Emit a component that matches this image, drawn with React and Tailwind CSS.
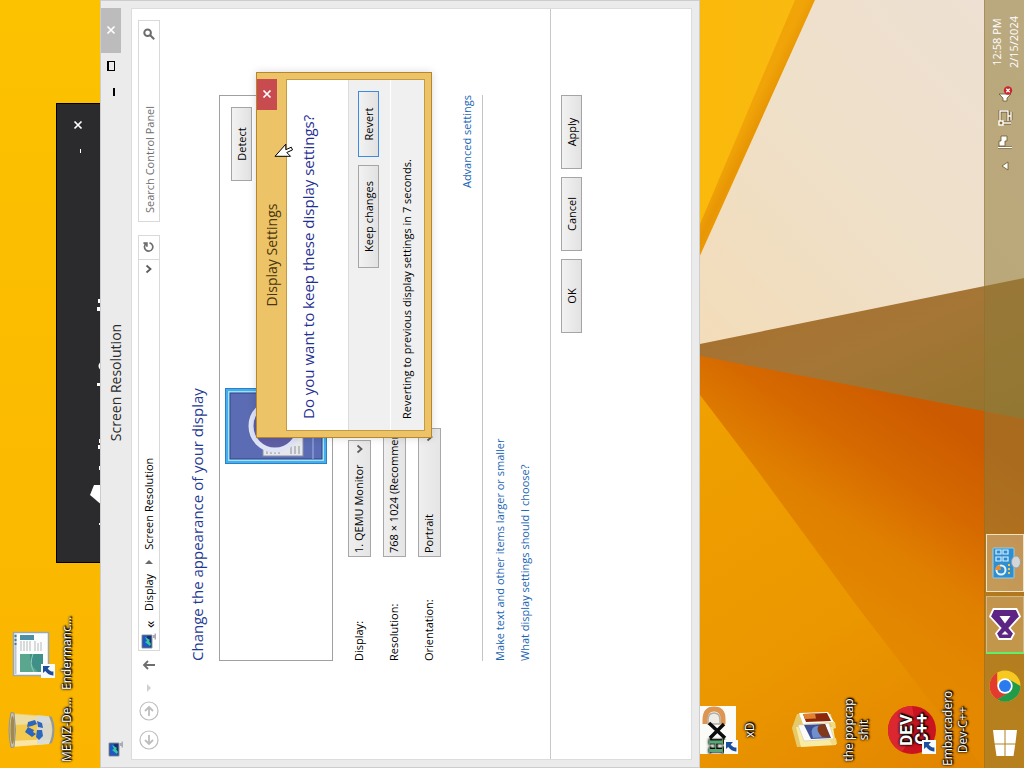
import React from "react";

const uiFont = "font-['Open_Sans','Noto_Sans',sans-serif]";

function Wallpaper() {
  return (
    <svg className="absolute inset-0 h-full w-full" viewBox="0 0 1024 768" preserveAspectRatio="none" aria-hidden="true">
      <defs>
        <linearGradient id="wpYellow" x1="0" y1="0" x2="0" y2="1">
          <stop offset="0" stopColor="#fcc200" />
          <stop offset="1" stopColor="#fbb500" />
        </linearGradient>
        <linearGradient id="wpTop" x1="0" y1="0" x2="1" y2="0">
          <stop offset="0" stopColor="#fab90a" />
          <stop offset="1" stopColor="#f8bc1c" />
        </linearGradient>
        <linearGradient id="wpCream" x1="0" y1="1" x2="1" y2="0">
          <stop offset="0" stopColor="#f3dcb8" />
          <stop offset="0.5" stopColor="#efe0c9" />
          <stop offset="1" stopColor="#eee0d4" />
        </linearGradient>
        <linearGradient id="wpBrown" x1="0" y1="0" x2="1" y2="1">
          <stop offset="0" stopColor="#a86e2c" />
          <stop offset="0.5" stopColor="#a57636" />
          <stop offset="1" stopColor="#94742c" />
        </linearGradient>
        <linearGradient id="wpOrange" gradientUnits="userSpaceOnUse" x1="900" y1="390" x2="780" y2="570">
          <stop offset="0" stopColor="#cc5a00" />
          <stop offset="0.35" stopColor="#d66a00" />
          <stop offset="0.65" stopColor="#e08000" />
          <stop offset="1" stopColor="#e48800" />
        </linearGradient>
        <linearGradient id="wpFloor" gradientUnits="userSpaceOnUse" x1="700" y1="400" x2="940" y2="768">
          <stop offset="0" stopColor="#f0a000" />
          <stop offset="0.6" stopColor="#eb9700" />
          <stop offset="1" stopColor="#e28600" />
        </linearGradient>
        <linearGradient id="wpEdge" gradientUnits="userSpaceOnUse" x1="744" y1="125" x2="766" y2="136">
          <stop offset="0" stopColor="#f0a408" />
          <stop offset="0.5" stopColor="#e89604" />
          <stop offset="1" stopColor="#f09c0c" />
        </linearGradient>
      </defs>
      <rect width="1024" height="768" fill="url(#wpYellow)" />
      <rect x="690" width="334" height="360" fill="url(#wpTop)" />
      <polygon points="795,0 815,0 700,256 690,278 690,245 700,224" fill="url(#wpEdge)" />
      <polygon points="815,0 1024,0 1024,290 690,352 690,278" fill="url(#wpCream)" />
      <polygon points="690,346 1024,278 1024,420 690,356" fill="url(#wpBrown)" />
      <polygon points="690,354 1024,419 1024,768 690,768" fill="url(#wpOrange)" />
      <polygon points="690,382 713,412 757,470 857,606 923,692 984,768 690,768" fill="url(#wpFloor)" />
    </svg>
  );
}

function ShortcutBadge() {
  return (
    <svg className="absolute bottom-0 left-0 size-[14px]" viewBox="0 0 14 14" aria-hidden="true">
      <rect width="14" height="14" fill="#f8fafc" />
      <path d="M5 2h7v7l-2.4-2.3C7.600 8 6.600 9.800 6.400 12.400H2.600C2.400 9.200 4 6.400 6.900 4.200z" fill="#1d4f9c" />
    </svg>
  );
}

function BinIcon() {
  return (
    <svg viewBox="0 0 48 48" className="size-12" aria-hidden="true">
      <path d="M7 4 41 4 38 42Q24 49 10 42Z" fill="#f3cf62" fillOpacity="0.8" />
      <path d="M7 4 13 5 15 45Q11 44 10 42Z" fill="#fff" fillOpacity="0.5" />
      <path d="M29 8 40 6 37 42 31 44Z" fill="#e7ead9" fillOpacity="0.6" />
      <path d="M9 30 39 30 37.500 42Q24 48 10.500 42Z" fill="#d3dae0" fillOpacity="0.850" />
      <path d="M6.500 4Q24 0 41.500 4L41 7Q24 10 7 7Z" fill="#c9c3a0" stroke="#8f9495" strokeWidth="1" />
      <ellipse cx="24" cy="5.500" rx="14" ry="2" fill="#a2884a" />
      <path d="m17 25 5-7 5 3-3 6-2-1-2 3zM27 20l5 1 2 7-4 2-2-5zM17 29l7 1v5l-6 1-4-4zM27 31l6-1-2 5-5 1z" fill="#2d66bd" />
      <path d="M10 42Q24 49 38 42L37 45Q24 50 11 45Z" fill="#8b9aa6" />
    </svg>
  );
}

function PageIcon() {
  return (
    <svg viewBox="0 0 48 48" className="size-12" aria-hidden="true">
      <rect x="2.500" y="6.500" width="43" height="35" fill="#fbfcfc" stroke="#9aa7b0" strokeWidth="1.500" />
      <path d="M4 8.500h40" stroke="#b9c6cf" strokeWidth="2" />
      <path d="M33 8.500h10" stroke="#4879a8" strokeWidth="2" strokeDasharray="2 2" />
      <rect x="6" y="13" width="18" height="23" fill="#3f9088" />
      <path d="M6 13h18v10Q14 22 6 31z" fill="#5aa68f" />
      <path d="M6 27Q14 22 24 26" stroke="#8fcdb6" fill="none" />
      <path d="M27 14h10M27 17h10M27 20h10M27 23h10M27 28h10M27 31h8M27 34h9" stroke="#b6b8ba" />
      <rect x="38" y="13" width="5" height="14" fill="#4e8fa4" />
    </svg>
  );
}

function HxdIcon() {
  return (
    <svg viewBox="0 0 48 48" className="size-12" aria-hidden="true">
      <rect width="48" height="46" fill="#fbfbf8" />
      <text x="0" y="33" fontSize="20" fontWeight="700" fill="#5aa878" fontFamily="Liberation Serif, serif">H</text>
      <path d="M30 15h4q11 0 11 9T35 33h-5" fill="none" stroke="#dd9550" strokeWidth="5" />
      <path d="M30 18h4q7 0 7 6t-7 6h-4z" fill="#efece6" stroke="#b3aca2" strokeWidth="1.500" />
      <path d="m16 20 14 14M31 19 16 35" stroke="#0c0c0c" strokeWidth="3.500" />
    </svg>
  );
}

function FolderIcon() {
  return (
    <svg viewBox="0 0 48 48" className="size-12" aria-hidden="true">
      <path d="M7 8 26 3 40 8 40 42 10 46Z" fill="#e6ca6a" />
      <path d="M7 12 27 7 27 44 9 47Z" fill="#f8eca4" />
      <path d="M13 15 29 9 31 40 15 45Z" fill="#fafafa" stroke="#c9c2a0" strokeWidth="0.500" />
      <path d="M15 22 29 15 30 36 16 42Z" fill="#3c4f94" />
      <path d="M16 24q11-4 12 4t-11 11z" fill="#6f8fcf" />
      <path d="M17 33q7-7 12-3l1 6-13 5z" fill="#81391a" />
      <path d="M30 14 41 10 42 39 32 45Z" fill="#fdfdfd" />
      <path d="M32 17 40 14 41 38 33 42Z" fill="#8c2709" />
      <path d="M35 16l5-2 .4 12-5 1z" fill="#e0822e" />
      <path d="M9 43 15 40 16 47 10 48ZM25 44l7-3v5l-6 1z" fill="#f0dc87" />
    </svg>
  );
}

function DevIcon() {
  return (
    <svg viewBox="0 0 48 48" className="size-12" aria-hidden="true">
      <circle cx="24" cy="24" r="24" fill="#c9141f" />
      <path d="M24 0a24 24 0 0 1 24 24Q24 30 2 14A24 24 0 0 1 24 0z" fill="#dc2730" />
      <text x="24" y="24" textAnchor="middle" fontSize="17" fontWeight="700" fill="#fff" fontFamily="Roboto, sans-serif">DEV</text>
      <text x="25" y="40" textAnchor="middle" fontSize="18" fontWeight="700" fill="#fff" fontFamily="Roboto, sans-serif">C++</text>
    </svg>
  );
}

function DesktopItem({ icon, label, shortcut }) {
  return (
    <button type="button" className="flex h-[99px] w-[76px] flex-col items-center gap-1 text-[12px] leading-[15px] text-white [text-shadow:0_0_2px_#000,1px_1px_1px_#000,1px_1px_2px_#000,0_0_3px_#000]">
      <span className="relative block">
        {icon}
        {shortcut && <ShortcutBadge />}
      </span>
      <span className="w-full px-[2px] text-center">{label}</span>
    </button>
  );
}

function MonitorIcon() {
  return (
    <svg viewBox="0 0 16 16" className="size-4" aria-hidden="true">
      <path d="M1 1h13v10H1z" fill="#17306f" stroke="#8c97a8" />
      <path d="M2 2h11v4q-5 0-11 4z" fill="#1d57c8" />
      <path d="m3 9 4-5 1 2 4-2-3 5-1-1-3 2z" fill="#36c7a0" />
      <path d="M11 12h3v1.500h1.500V15h-6v-1.500H11z" fill="#a9adb2" />
    </svg>
  );
}

function Chevron() {
  return (
    <svg viewBox="0 0 10 10" className="size-[10px]" aria-hidden="true">
      <path d="M1.500 2.500 5 6.500l3.500-4" fill="none" stroke="#5c5c5c" strokeWidth="1.800" />
    </svg>
  );
}

function Cross() {
  return (
    <svg viewBox="0 0 10 10" className="size-[10px]" aria-hidden="true">
      <path d="m1.500 1.500 7 7m0-7-7 7" stroke="#fff" strokeWidth="1.700" />
    </svg>
  );
}

function PushButton({ children, width, focused }) {
  return (
    <button
      type="button"
      className={`${width} h-[21px] border bg-linear-to-b from-[#f2f2f2] to-[#e2e2e2] text-center leading-[18px] text-black ${focused ? "border-[#3c8be0]" : "border-[#a5a5a5]"}`}
    >
      {children}
    </button>
  );
}

function Field({ id, label, width, options }) {
  return (
    <div className="flex h-[23px] items-center">
      <label htmlFor={id} className="w-[104px] text-black">{label}</label>
      <div className={`relative h-full ${width}`}>
        <select id={id} className="h-full w-full appearance-none border border-[#a8a8a8] bg-linear-to-b from-[#efefef] to-[#e5e5e5] pl-[3px] text-black">
          {options.map((o) => (
            <option key={o}>{o}</option>
          ))}
        </select>
        <span className="pointer-events-none absolute inset-y-0 right-1 flex items-center">
          <Chevron />
        </span>
      </div>
    </div>
  );
}

function SplashWindow() {
  return (
    <section aria-label="Splash" className="absolute top-[56px] left-[205px] h-[200px] w-[460px] border border-black bg-[#2b2b2d]">
      <div className="flex h-[42px] items-center justify-end gap-[15px] pr-[16px]">
        <button type="button" aria-label="Minimize" className="flex w-[12px] justify-center pt-[5px]">
          <span className="h-px w-1 bg-white" />
        </button>
        <button type="button" aria-label="Close">
          <Cross />
        </button>
      </div>
      <svg className="absolute top-[32px] left-0 h-[14px] w-[458px]" viewBox="0 0 458 14" aria-hidden="true" fill="#fff">
        <path d="M56 14 67 1l10 4v9z" />
        <path d="M37 10h2v4h-2zM92 10h4v4h-4zM113 9h4v5h-4zM119 10h4v4h-4zM176 8h3v6h-3zM190 14q6-9 12 0zM251 8h4v6h-4zM259 9h4v5h-4z" />
      </svg>
    </section>
  );
}

function Toolbar() {
  return (
    <div className="flex h-[22px] items-center pr-[11px] pl-[9px] text-[11px]">
      <div className="flex w-[99px] items-center gap-[9px] text-[#bdbdbd]">
        <button type="button" aria-label="Back">
          <svg viewBox="0 0 20 20" className="size-5" fill="none" stroke="currentColor">
            <circle cx="10" cy="10" r="9" strokeWidth="1.200" />
            <path d="M15 10H6m4-4-4 4 4 4" strokeWidth="1.800" />
          </svg>
        </button>
        <button type="button" aria-label="Forward">
          <svg viewBox="0 0 20 20" className="size-5" fill="none" stroke="currentColor">
            <circle cx="10" cy="10" r="9" strokeWidth="1.200" />
            <path d="M5 10h9m-4-4 4 4-4 4" strokeWidth="1.800" />
          </svg>
        </button>
        <button type="button" aria-label="Recent locations">
          <svg viewBox="0 0 8 6" className="h-[6px] w-2">
            <path d="M0 1h8L4 5z" fill="#cfcfcf" />
          </svg>
        </button>
        <button type="button" aria-label="Up" className="pl-1 text-[#6e6e6e]">
          <svg viewBox="0 0 12 14" className="h-[14px] w-3" fill="none" stroke="currentColor" strokeWidth="1.800">
            <path d="M6 13V2M2 6l4-4 4 4" />
          </svg>
        </button>
      </div>
      <nav aria-label="Address" className="flex h-full flex-1 items-center border border-[#d9d9d9] pl-px text-black">
        <MonitorIcon />
        <span className="w-[22px] pl-[5px] text-[15px] leading-4">«</span>
        <a href="#display">Display</a>
        <svg viewBox="0 0 6 8" className="mx-[9px] h-2 w-[6px]" aria-hidden="true">
          <path d="M1 0v8l4-4z" fill="#6a6a6a" />
        </svg>
        <a href="#resolution">Screen Resolution</a>
        <span className="ml-auto pr-1">
          <Chevron />
        </span>
        <button type="button" aria-label="Refresh" className="flex h-full w-6 items-center justify-center border-l border-[#d9d9d9]">
          <svg viewBox="0 0 12 12" className="size-3" fill="none" stroke="#6e6e6e" strokeWidth="1.700">
            <path d="M9.500 3.200A4.200 4.200 0 1 0 10.200 6.500" />
            <path d="M6.200 3.900h3.600V.4" />
          </svg>
        </button>
      </nav>
      <div className="relative ml-[13px] h-full w-[202px]">
        <input aria-label="Search Control Panel" placeholder="Search Control Panel" className="h-full w-full border border-[#d9d9d9] bg-white pr-6 pl-[8px] text-black outline-none placeholder:text-[#6d6d6d]" />
        <span className="pointer-events-none absolute inset-y-0 right-2 flex items-center">
          <svg viewBox="0 0 12 12" className="size-3" fill="none" stroke="#6b6b6b" strokeWidth="2" aria-hidden="true">
            <circle cx="7.300" cy="4.600" r="3.300" />
            <path d="m5 7-4.200 4.200" />
          </svg>
        </span>
      </div>
    </div>
  );
}

function ResolutionWindow() {
  return (
    <section aria-label="Screen Resolution" className="absolute top-[100px] left-0 flex h-[600px] w-full flex-col border border-[#cdcdcd] bg-[#ebebeb] px-[7px] pb-[7px]">
      <header className="flex h-[30px] items-start">
        <div className="flex h-full flex-1 items-center pl-[3px]">
          <MonitorIcon />
        </div>
        <h1 className="self-center text-[14px] leading-5 text-[#2b2b2b]">Screen Resolution</h1>
        <div className="flex flex-1 items-start justify-end">
          <button type="button" aria-label="Minimize" className="flex h-5 w-[28px] items-center pt-[6px] pl-[3px]">
            <span className="h-[2px] w-2 bg-black" />
          </button>
          <button type="button" aria-label="Maximize" className="flex h-5 w-[18px] items-center">
            <span className="h-2 w-[10px] border border-t-2 border-black" />
          </button>
          <button type="button" aria-label="Close" className="flex h-5 w-[45px] items-center justify-center bg-[#bcbcbc]">
            <Cross />
          </button>
        </div>
      </header>
      <div className="flex flex-1 flex-col border border-[#dcdcdc] bg-white pt-[6px] text-[11px]">
        <Toolbar />
        <main className="pr-[86px] pl-[98px]">
          <h2 className="mt-[27px] text-[15px] leading-5 text-[#1f3a93]">Change the appearance of your display</h2>
          <div className="mt-3 flex h-[114px] items-start border border-[#a0a0a0] pt-[5px] pr-[11px] pl-[196px]">
            <svg viewBox="0 0 76 102" className="h-[102px] w-[76px]" role="img" aria-label="Monitor 1">
              <rect x="0.500" y="0.500" width="75" height="101" fill="#9fe3f7" stroke="#2f7fc4" />
              <rect x="2" y="2" width="72" height="98" fill="none" stroke="#45aef0" strokeWidth="2" />
              <rect x="5" y="5" width="66" height="92" fill="#5b6cb4" stroke="#30458a" />
              <path d="M5 88h66" stroke="#9fb4e0" />
              <rect x="8" y="38" width="60" height="40" fill="#e6e8ec" stroke="#8991a5" />
              <path d="M10 42h8M10 46h8M10 50h8M10 54h8M10 66h8M10 70h8M10 74h8" stroke="#8a8f99" />
              <circle cx="38" cy="50" r="24" fill="#5f5fa6" stroke="#dfe4f6" strokeWidth="5" />
            </svg>
            <div className="mt-[6px] ml-auto">
              <PushButton width="w-[74px]">Detect</PushButton>
            </div>
          </div>
          <div className="mt-[15px] flex flex-col gap-3">
            <Field id="display" label="Display:" width="w-[117px]" options={["1. QEMU Monitor"]} />
            <Field id="resolution" label="Resolution:" width="w-[180px]" options={["768 × 1024 (Recommended)"]} />
            <Field id="orientation" label="Orientation:" width="w-[129px]" options={["Portrait", "Landscape"]} />
          </div>
          <div className="mt-[18px] border-b border-[#c4c4c4] pb-[7px] text-right leading-4">
            <a href="#advanced" className="text-[#1a66b5]">Advanced settings</a>
          </div>
          <div className="mt-[9px] flex flex-col items-start gap-[9px] leading-4">
            <a href="#size" className="text-[#1a66b5]">Make text and other items larger or smaller</a>
            <a href="#help" className="text-[#1a66b5]">What display settings should I choose?</a>
          </div>
        </main>
        <footer className="mt-[17px] flex justify-end gap-2 border-t border-[#c8c8c8] pt-[10px] pr-[86px]">
          <PushButton width="w-[74px]">OK</PushButton>
          <PushButton width="w-[74px]">Cancel</PushButton>
          <PushButton width="w-[74px]">Apply</PushButton>
        </footer>
      </div>
    </section>
  );
}

function ConfirmDialog() {
  return (
    <section role="dialog" aria-label="Display Settings" className="absolute top-[256px] left-[330px] flex h-[176px] w-[366px] flex-col border border-[#b8862c] bg-[#ecc467] px-[6px] pb-[6px] text-[11px] shadow-[0_0_8px_rgba(0,0,0,0.15)]">
      <header className="flex h-[29px] items-start">
        <span className="w-[31px]" />
        <h2 className="flex-1 pt-[5px] text-center text-[14px] leading-5 text-[#4a3510]">Display Settings</h2>
        <button type="button" aria-label="Close" className="flex h-5 w-[31px] items-center justify-center bg-[#c84b4f]">
          <Cross />
        </button>
      </header>
      <div className="flex flex-1 flex-col border border-[#c59a44] bg-[#f0f0f0]">
        <p className="h-[61px] bg-white pt-[11px] pl-[11px] text-[15px] leading-5 text-[#1f2f93]">Do you want to keep these display settings?</p>
        <div className="flex h-[43px] items-start justify-end gap-2 border-t border-b border-t-[#dcdcdc] border-b-white pt-[9px] pr-[11px]">
          <PushButton width="w-[103px]">Keep changes</PushButton>
          <PushButton width="w-[66px]" focused>Revert</PushButton>
        </div>
        <p className="pt-2 pl-[11px] leading-4 text-black">Reverting to previous display settings in 7 seconds.</p>
      </div>
    </section>
  );
}

function Taskbar() {
  return (
    <footer className="absolute inset-x-0 bottom-0 flex h-10 items-center border-t border-[#8f6a20]/40 bg-[#907a38]/55 text-white">
      <button type="button" aria-label="Start" className="flex w-[50px] justify-center">
        <svg viewBox="0 0 26 24" className="h-6 w-[26px]" fill="#fff" aria-hidden="true">
          <path d="M0 3.500 11.500 1.800V11.500H0zM12.500 1.600 26 0v11.500H12.500zM0 12.500h11.500v9.700L0 20.500zM12.500 12.500H26V24l-13.500-1.600z" />
        </svg>
      </button>
      <button type="button" aria-label="Chrome" className="flex w-[64px] justify-center">
        <svg viewBox="0 0 32 32" className="size-8" aria-hidden="true">
          <circle cx="16" cy="16" r="15.500" fill="#f7c81f" />
          <path d="M2.600 8.200A15.500 15.500 0 0 1 29.400 8.200H16L9.300 20z" fill="#e33b2e" />
          <path d="M2.600 8.200A15.500 15.500 0 0 0 16 31.500L22.800 19.800H9.500z" fill="#229a4a" />
          <circle cx="16" cy="16" r="7.700" fill="#fff" />
          <circle cx="16" cy="16" r="6" fill="#2b7bf0" />
        </svg>
      </button>
      <button type="button" aria-label="Visual Studio" className="flex h-[38px] w-[58px] items-center justify-center border border-l-2 border-[#d9c9a0]/70 border-l-[#5df06a] bg-white/20">
        <svg viewBox="0 0 32 32" className="size-8" aria-hidden="true">
          <path d="M23.500 1 31 4.500v23L23.500 31 12 20.500l-5.500 4.500L1 22V10l5.500-3 5.500 4.500z" fill="#5c2483" stroke="#fff" strokeWidth="1.800" />
          <path d="M24 10.500v11L16.500 16zM5.500 12.500v7L9 16z" fill="#fff" />
        </svg>
      </button>
      <button type="button" aria-label="Control Panel" className="ml-1 flex h-[38px] w-[58px] items-center justify-center border border-[#efe3c2] bg-white/25">
        <svg viewBox="0 0 32 32" className="size-8" aria-hidden="true">
          <rect x="1" y="4" width="30" height="21" rx="1" fill="#2f8ed0" stroke="#8fd0f0" />
          <circle cx="9" cy="12" r="4.500" fill="none" stroke="#e8f4fb" strokeWidth="2" />
          <path d="M9 12V6a6 6 0 0 1 5 5z" fill="#f08c28" />
          <path d="M5 20h2M9 20h2M13 20h2" stroke="#f5c542" strokeWidth="2" />
          <path d="M18 7h4v5h-4zM25 7h4v5h-4zM18 14h4v5h-4zM25 14h4v5h-4z" fill="none" stroke="#d6f0ff" strokeWidth="1.200" />
          <ellipse cx="17" cy="27" rx="6" ry="4.500" fill="#d3d6d8" stroke="#9b9ea0" />
        </svg>
      </button>
      <div className="ml-auto flex items-center gap-2 pr-4">
        <button type="button" aria-label="Show hidden icons">
          <svg viewBox="0 0 16 16" className="size-4" aria-hidden="true">
            <path d="M8 5l4 6H4z" fill="#fff" stroke="#6b5528" strokeWidth="0.800" />
          </svg>
        </button>
        <svg viewBox="0 0 16 16" className="size-4" role="img" aria-label="Action Center">
          <path d="M2.500 1v14" stroke="#6b5528" strokeWidth="3" />
          <path d="M2.500 1v14" stroke="#fff" strokeWidth="1.600" />
          <path d="M4 2h5v2h5v6H9V8H4z" fill="#fff" stroke="#6b5528" strokeWidth="0.800" />
        </svg>
        <svg viewBox="0 0 16 16" className="size-4" role="img" aria-label="Network" fill="none">
          <path d="M5 3h10v8H5M10 11v3M6 14h8M3 5v9" stroke="#6b5528" strokeWidth="2.800" />
          <path d="M5 3h10v8H5M10 11v3M6 14h8M3 5v9" stroke="#fff" strokeWidth="1.400" />
          <rect x="1" y="2" width="4" height="4" fill="#8e7032" stroke="#fff" strokeWidth="1.400" />
        </svg>
        <svg viewBox="0 0 16 16" className="size-4" role="img" aria-label="Volume muted">
          <path d="M1 6h3l4-4v12l-4-4H1z" fill="#fff" stroke="#6b5528" strokeWidth="0.800" />
          <circle cx="11.500" cy="11" r="4.200" fill="#c9282d" />
          <path d="m9.800 9.300 3.400 3.400m0-3.400-3.400 3.400" stroke="#fff" strokeWidth="1.300" />
        </svg>
        <div className="ml-[10px] text-center text-[11px] leading-[17px]">
          <div>12:58 PM</div>
          <div>2/15/2024</div>
        </div>
      </div>
    </footer>
  );
}

function Cursor() {
  return (
    <svg viewBox="0 0 15 20" className="absolute top-[274px] left-[611px] h-5 w-[15px]" aria-hidden="true">
      <path d="M.7 1v15.500l3.800-3.700 2.600 5.700 2.700-1.200-2.500-5.500h5.500z" fill="#fff" stroke="#000" strokeWidth="1" />
    </svg>
  );
}

export default function App() {
  return (
    <div className={`relative h-screen w-full overflow-hidden bg-[#fbb900] ${uiFont}`}>
      <Wallpaper />
      <div className="absolute top-full left-0 h-[100vw] w-[100vh] origin-top-left -rotate-90">
        <div className="absolute top-[7px] left-0 flex">
          <DesktopItem icon={<BinIcon />} label="MEMZ-De..." />
          <DesktopItem icon={<PageIcon />} label="Endermanc..." shortcut />
        </div>
        <div className="absolute top-[690px] left-0 flex flex-col">
          <DesktopItem icon={<HxdIcon />} label="xD" shortcut />
          <DesktopItem icon={<FolderIcon />} label="the popcap shit" />
          <DesktopItem icon={<DevIcon />} label="Embarcadero Dev-C++" shortcut />
        </div>
        <SplashWindow />
        <ResolutionWindow />
        <ConfirmDialog />
        <Taskbar />
        <Cursor />
      </div>
    </div>
  );
}
